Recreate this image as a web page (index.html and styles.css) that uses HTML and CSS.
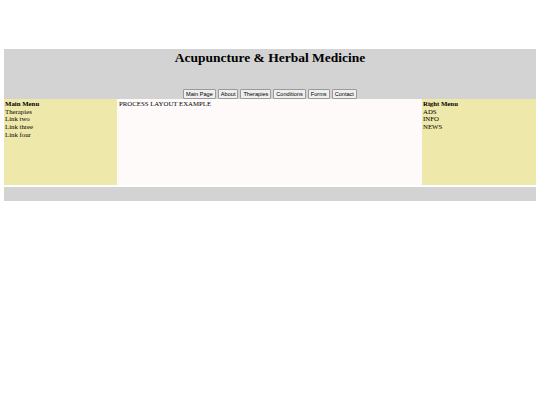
FILE: index.html
```html
<!DOCTYPE html>
<html>
<head>
<meta charset="utf-8">
<link rel="stylesheet" href="styles.css">
</head>
<body>
<div class="page">
  <header class="header">
    <h1 class="title">Acupuncture &amp; Herbal Medicine</h1>
    <nav class="nav">
      <button class="btn">Main Page</button>
      <button class="btn">About</button>
      <button class="btn">Therapies</button>
      <button class="btn">Conditions</button>
      <button class="btn">Forms</button>
      <button class="btn">Contact</button>
    </nav>
  </header>
  <div class="columns">
    <div class="side left">
      <b>Main Menu</b><br>
      Therapies<br>
      Link two<br>
      Link three<br>
      Link four
    </div>
    <div class="main">PROCESS LAYOUT EXAMPLE</div>
    <div class="side right">
      <b>Right Menu</b><br>
      ADS<br>
      INFO<br>
      NEWS
    </div>
  </div>
  <footer class="footer"></footer>
</div>
</body>
</html>
```
FILE: styles.css
```css
html, body {
  margin: 0;
  padding: 0;
  background: #ffffff;
}
body {
  font-family: "Liberation Serif", "Times New Roman", serif;
  font-size: 6.8px;
  line-height: 7.7px;
  color: #000;
}
.page {
  padding: 49px 4px 0 4px;
}
.header {
  background: #d3d3d3;
  height: 50px;
  display: flex;
  flex-direction: column;
  align-items: center;
  box-sizing: border-box;
}
.title {
  margin: 1px 0 0 0;
  font-size: 13.5px;
  line-height: 16px;
  font-weight: bold;
}
.nav {
  margin-top: auto;
  margin-bottom: 0;
  display: flex;
  gap: 2px;
}
.btn {
  font-family: "Liberation Sans", Arial, sans-serif;
  font-size: 5.6px;
  line-height: 6px;
  padding: 1px 2px;
  background: #efefef;
  border: 1px solid #9a9a9a;
  border-radius: 1px;
  color: #000;
  margin: 0;
}
.columns {
  display: flex;
  height: 86px;
}
.side {
  background: #eee8aa;
  padding: 1px 1px;
  box-sizing: border-box;
}
.left {
  width: 113px;
}
.right {
  width: 114px;
}
.main {
  flex: 1;
  background: #fffafa;
  padding: 1px 2px;
}
.footer {
  margin-top: 2px;
  height: 14px;
  background: #d3d3d3;
}
```
